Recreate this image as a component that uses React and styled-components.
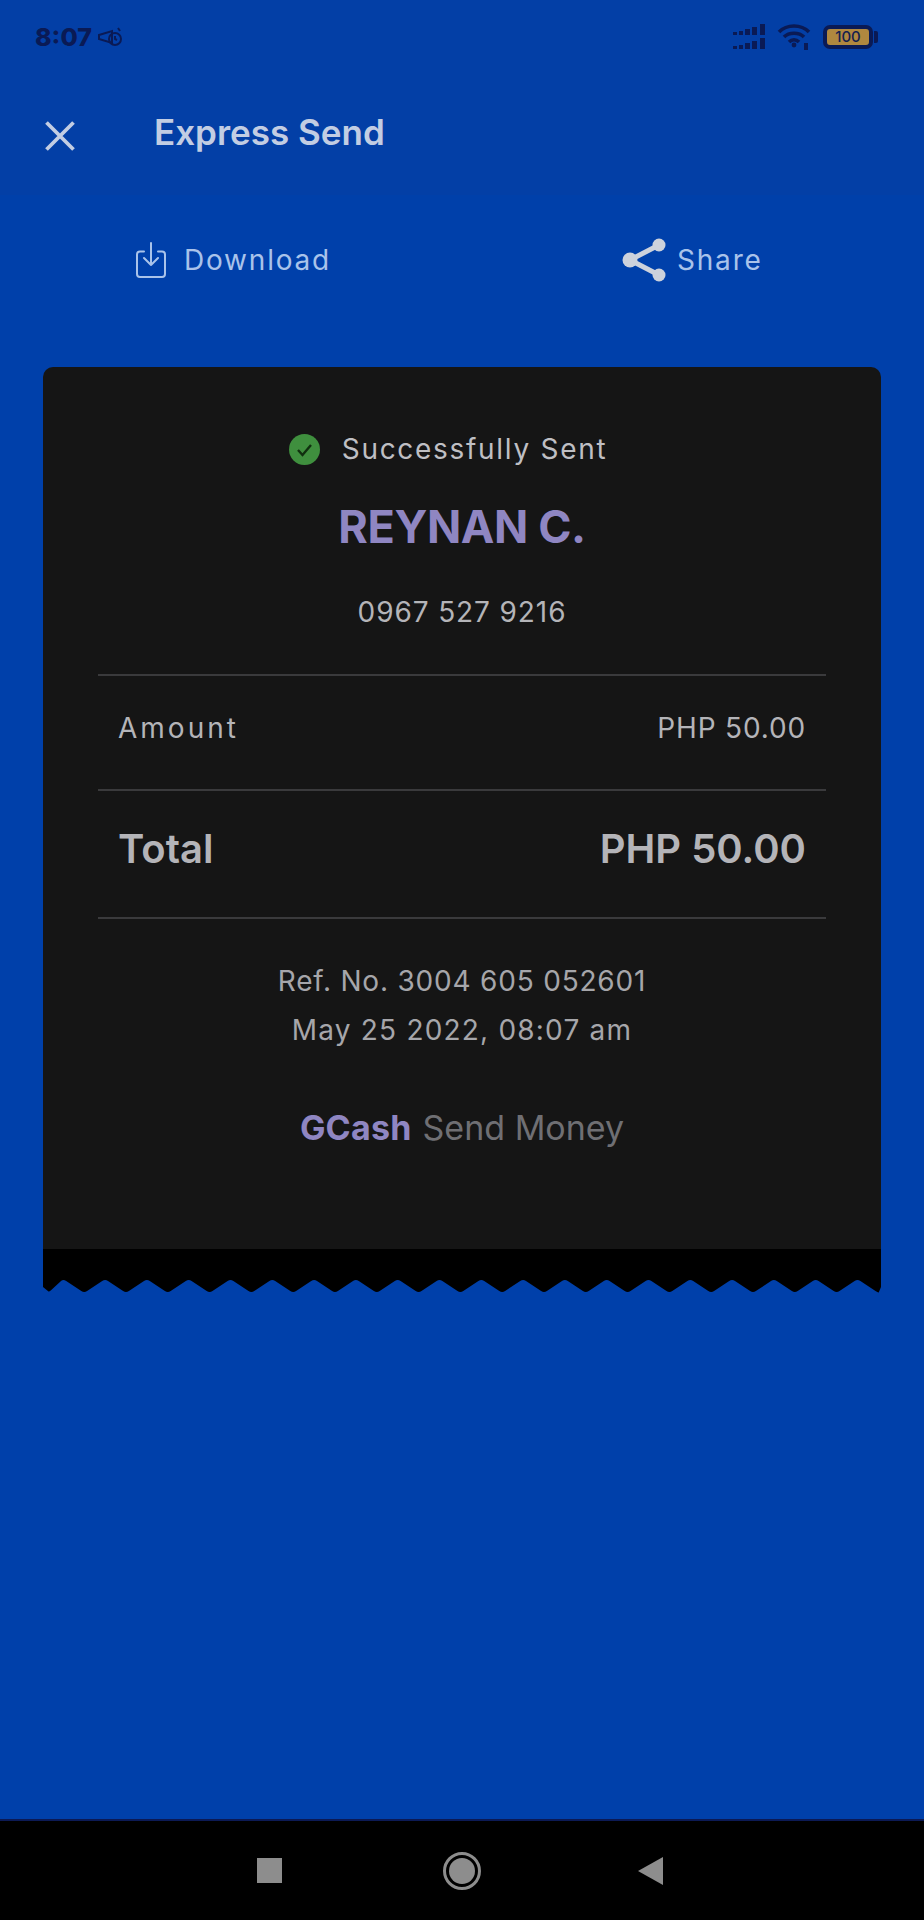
import React from "react";
import styled, { createGlobalStyle } from "styled-components";

const Global = createGlobalStyle`
  html, body { margin: 0; padding: 0; background: #0040aa; }
  * { box-sizing: border-box; }
`;

const Page = styled.div`
  width: 924px; height: 1920px; display: flex; flex-direction: column;
  background: #0040aa; font-family: Inter, "Noto Sans", sans-serif; overflow: hidden;
`;
const TopArea = styled.div`
  height: 195px; background: #033fa6; display: flex; flex-direction: column;
`;
const StatusBar = styled.div`
  height: 73px; padding: 22px 51px 0 35px; display: flex; justify-content: space-between; align-items: flex-start;
  color: #0a1a55;
`;
const Clock = styled.div`
  display: flex; align-items: center; gap: 6px; font-size: 25px; line-height: 30px; font-weight: 800;
`;
const StatusIcons = styled.div`
  display: flex; align-items: center; gap: 12px; height: 30px;
`;
const Battery = styled.div`
  position: relative; width: 50px; height: 24px; border: 4px solid #0a1a55; border-radius: 7px;
  background: #b0883f; color: #13204f; font-size: 15px; line-height: 16px; font-weight: 500; text-align: center;
  &::after {
    content: ""; position: absolute; right: -9px; top: 2px; width: 4px; height: 12px; background: #0a1a55; border-radius: 0 2px 2px 0;
  }
`;
const Header = styled.header`
  flex: 1; display: flex; align-items: flex-start; padding: 39px 0 0 45px;
`;
const CloseBtn = styled.div`
  width: 30px; height: 30px; margin-top: 9px; margin-right: 79px; display: flex;
`;
const Title = styled.h1`
  margin: 0; font-size: 35px; line-height: 40px; font-weight: 600; color: #c2cde3;
`;
const Actions = styled.div`
  height: 172px; display: grid; grid-template-columns: 460px 1fr; padding-top: 40px; align-items: start;
`;
const Action = styled.div`
  display: flex; align-items: center; height: 50px; gap: ${p => p.$gap}px; padding-left: ${p => p.$left}px;
`;
const ActionLabel = styled.span`
  font-size: 28px; letter-spacing: 1.8px; color: #a9c3ea;
`;
const Receipt = styled.section`
  margin: 0 43px; display: flex; flex-direction: column;
`;
const CardBody = styled.div`
  height: 882px; background: #151515; border-radius: 10px 10px 0 0; padding: 64px 55px 0;
  display: flex; flex-direction: column; align-items: stretch;
`;
const StatusRow = styled.div`
  display: flex; align-items: center; justify-content: center; gap: 22px; height: 36px; padding-right: 28px;
`;
const StatusText = styled.span`
  font-size: 28px; letter-spacing: 1.7px; color: #bfbfc3;
`;
const Name = styled.div`
  margin-top: 33px; text-align: center; font-size: 45px; line-height: 54px; font-weight: 700; letter-spacing: -0.4px; color: #8f86c2;
`;
const Phone = styled.div`
  margin-top: 41px; text-align: center; font-size: 28px; line-height: 34px; color: #b4b4b8; letter-spacing: 0.9px;
`;
const Divider = styled.hr`
  margin: ${p => p.$top}px 0 0; border: 0; height: 2px; background: #3a3a3c;
`;
const Row = styled.div`
  height: ${p => p.$h}px; padding: 0 20px ${p => p.$lift}px 20px; display: flex; justify-content: space-between; align-items: center;
  font-size: ${p => p.$size}px; font-weight: ${p => p.$weight}; color: #b4b4b8;
`;
const RowText = styled.span`
  letter-spacing: ${p => p.$ls}px;
`;
const Meta = styled.div`
  margin-top: 38px; display: flex; flex-direction: column; align-items: center;
  font-size: 28px; line-height: 49px; color: #a6a6aa;
`;
const MetaLine = styled.span`
  letter-spacing: ${p => p.$ls}px;
`;
const Brand = styled.div`
  margin-top: 53px; text-align: center; font-size: 34px; line-height: 40px; color: #6f6f73;
`;
const BrandName = styled.span`
  font-weight: 700; color: #8f86c2; margin-right: 11px; letter-spacing: 0.2px;
`;
const Tear = styled.div`
  height: 46px; display: flex;
`;
const Spacer = styled.div`flex: 1;`;
const NavBar = styled.nav`
  height: 101px; background: #000; border-top: 2px solid #0c1a55;
  display: flex; justify-content: center; align-items: center;
`;
const NavSlot = styled.div`
  width: 192px; display: flex; justify-content: center; align-items: center; padding-right: ${p => p.$shift || 0}px;
`;
const NavSquare = styled.div`
  width: 25px; height: 25px; background: #8d8d8d;
`;
const NavHome = styled.div`
  width: 38px; height: 38px; border-radius: 50%; border: 3px solid #8d8d8d; padding: 3px;
  &::after { content: ""; display: block; width: 100%; height: 100%; border-radius: 50%; background: #8d8d8d; }
`;

function tearPath(width) {
  const period = 41.8, start = 20.3, peak = 30, trough = 44, base = 38;
  const pts = [[width, base]];
  for (let x = start + period * 20; x > 0; x -= period) {
    if (x + period / 2 < width) pts.push([x + period / 2, trough]);
    if (x < width) pts.push([x, peak]);
  }
  pts.push([6, trough - 1], [0, base]);
  let d = `M0 0 H${width} V${base} `;
  for (let i = 1; i < pts.length - 1; i++) {
    const [px, py] = pts[i - 1], [x, y] = pts[i], [nx, ny] = pts[i + 1];
    const a = 0.14;
    d += `L${(x + (px - x) * a).toFixed(1)} ${(y + (py - y) * a).toFixed(1)} `;
    d += `Q${x.toFixed(1)} ${y} ${(x + (nx - x) * a).toFixed(1)} ${(y + (ny - y) * a).toFixed(1)} `;
  }
  return d + `L0 ${base} Z`;
}

export default function App() {
  return (
    <Page>
      <Global />
      <TopArea>
        <StatusBar>
          <Clock>
            8:07
            <svg width="26" height="24" viewBox="0 0 26 24" fill="none" stroke="#0a1a55" strokeWidth="2">
              <path d="M1 10 L14 6 V18 L1 14 Z" />
              <circle cx="17" cy="14" r="6" />
              <path d="M17 11v3l2 1M20 3l2 3" />
            </svg>
          </Clock>
          <StatusIcons>
            <svg width="32" height="26" viewBox="0 0 32 26" fill="#0a1a55">
              <rect x="0" y="8" width="4" height="3" /><rect x="6" y="7" width="4" height="4" /><rect x="12" y="5" width="5" height="6" /><rect x="19" y="3" width="5" height="8" /><rect x="27" y="0" width="5" height="11" />
              <rect x="0" y="22" width="4" height="3" /><rect x="6" y="21" width="4" height="4" /><rect x="12" y="19" width="5" height="6" /><rect x="19" y="17" width="5" height="8" /><rect x="27" y="14" width="5" height="11" />
            </svg>
            <svg width="34" height="28" viewBox="0 0 34 28" fill="none" stroke="#0a1a55" strokeWidth="3.6">
              <path d="M2 9 C10 1 24 1 32 9" />
              <path d="M7 14 C12 9 22 9 27 14" />
              <path d="M12 19 C15 16 19 16 22 19" />
              <circle cx="17" cy="22" r="2.4" fill="#0a1a55" stroke="none" />
              <rect x="27" y="20" width="4" height="7" fill="#0a1a55" stroke="none" />
            </svg>
            <Battery>100</Battery>
          </StatusIcons>
        </StatusBar>
        <Header>
          <CloseBtn>
            <svg width="30" height="30" viewBox="0 0 30 30" stroke="#c2cde3" strokeWidth="3.8" fill="none">
              <path d="M1.5 1.5 L28.5 28.5 M28.5 1.5 L1.5 28.5" />
            </svg>
          </CloseBtn>
          <Title>Express Send</Title>
        </Header>
      </TopArea>
      <Actions>
        <Action $left={135} $gap={17}>
          <svg width="32" height="36" viewBox="0 0 32 36" fill="none" stroke="#a9c3ea" strokeWidth="2" strokeLinecap="round" strokeLinejoin="round">
            <path d="M9 9.5 H5 Q2 9.5 2 12.5 V32 Q2 35 5 35 H27 Q30 35 30 32 V12.5 Q30 9.5 27 9.5 H23" />
            <path d="M16 1 V23 M9 16 L16 23 L23 16" />
          </svg>
          <ActionLabel>Download</ActionLabel>
        </Action>
        <Action $left={162} $gap={9}>
          <svg width="46" height="44" viewBox="0 0 46 44" fill="#cdd2dc" stroke="#cdd2dc">
            <path d="M8 22 L37 7 M8 22 L37 37" strokeWidth="5" />
            <circle cx="8" cy="22" r="7.5" stroke="none" />
            <circle cx="37" cy="7" r="6.5" stroke="none" />
            <circle cx="37" cy="37" r="6.5" stroke="none" />
          </svg>
          <ActionLabel>Share</ActionLabel>
        </Action>
      </Actions>
      <Receipt>
        <CardBody>
          <StatusRow>
            <svg width="31" height="31" viewBox="0 0 31 31">
              <circle cx="15.5" cy="15.5" r="15.5" fill="#3f8f3e" />
              <path d="M9 16 L13.5 21 L22 11" fill="none" stroke="#10300f" strokeWidth="2.4" />
            </svg>
            <StatusText>Successfully Sent</StatusText>
          </StatusRow>
          <Name>REYNAN C.</Name>
          <Phone>0967 527 9216</Phone>
          <Divider $top={45} />
          <Row $h={113} $lift={10} $size={28} $weight={400}>
            <RowText $ls={3}>Amount</RowText>
            <RowText $ls={0.85}>PHP 50.00</RowText>
          </Row>
          <Divider $top={0} />
          <Row $h={126} $lift={12} $size={40} $weight={600}>
            <RowText $ls={0}>Total</RowText>
            <RowText $ls={0}>PHP 50.00</RowText>
          </Row>
          <Divider $top={0} />
          <Meta>
            <MetaLine $ls={0.8}>Ref. No. 3004 605 052601</MetaLine>
            <MetaLine $ls={1.2}>May 25 2022, 08:07 am</MetaLine>
          </Meta>
          <Brand><BrandName>GCash</BrandName>Send Money</Brand>
        </CardBody>
        <Tear>
          <svg width="838" height="46" viewBox="0 0 838 46">
            <path d={tearPath(838)} fill="#000" />
          </svg>
        </Tear>
      </Receipt>
      <Spacer />
      <NavBar>
        <NavSlot $shift={1}><NavSquare /></NavSlot>
        <NavSlot><NavHome /></NavSlot>
        <NavSlot $shift={7}>
          <svg width="26" height="28" viewBox="0 0 26 28"><path d="M0 14 L25 0 V28 Z" fill="#8d8d8d" /></svg>
        </NavSlot>
      </NavBar>
    </Page>
  );
}
